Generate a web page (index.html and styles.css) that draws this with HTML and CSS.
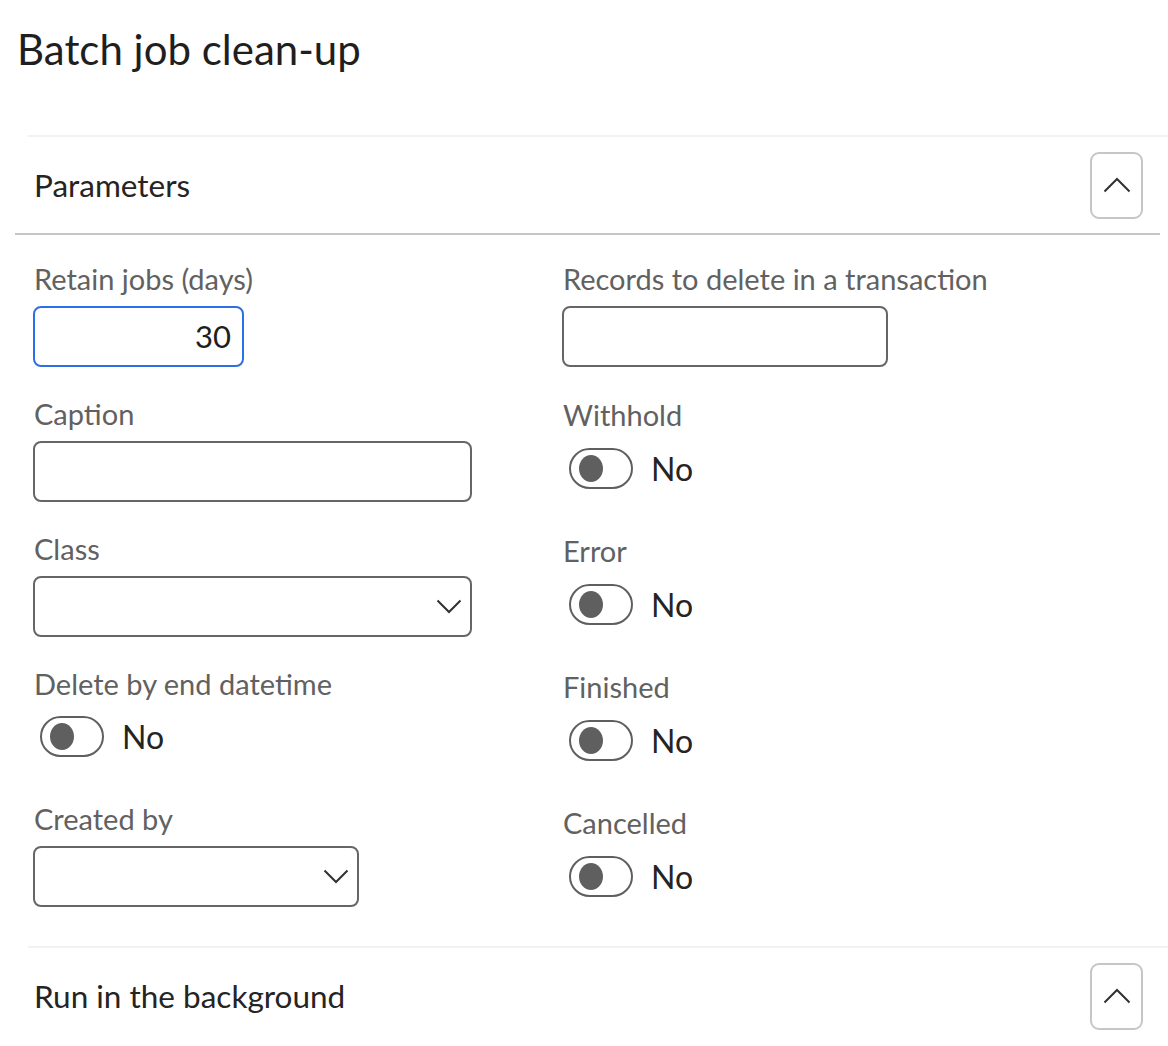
FILE: index.html
```html
<!DOCTYPE html>
<html lang="en">
<head>
<meta charset="utf-8">
<title>Batch job clean-up</title>
<link rel="stylesheet" href="styles.css">
</head>
<body>
<div class="page">
  <h1 class="title">Batch job clean-up</h1>

  <section class="section">
    <div class="section-head">
      <h2 class="section-title">Parameters</h2>
      <button class="collapse" type="button" aria-label="Collapse">
        <svg width="28" height="16" viewBox="0 0 28 16"><path d="M1.5 14.5 L14 2 L26.5 14.5" fill="none" stroke="#323130" stroke-width="2"/></svg>
      </button>
    </div>
  </section>
  <div class="rule"></div>

  <div class="form">
    <div class="col">
      <div class="field">
        <div class="label">Retain jobs (days)</div>
        <div class="control"><div class="input input-sm focused">30</div></div>
      </div>
      <div class="field">
        <div class="label">Caption</div>
        <div class="control"><div class="input input-lg"></div></div>
      </div>
      <div class="field">
        <div class="label">Class</div>
        <div class="control"><div class="input input-lg select">
          <svg class="chev" width="26" height="15" viewBox="0 0 26 15"><path d="M1.5 1.5 L13 13 L24.5 1.5" fill="none" stroke="#323130" stroke-width="2"/></svg>
        </div></div>
      </div>
      <div class="field">
        <div class="label">Delete by end datetime</div>
        <div class="control toggle-row"><span class="toggle"><span class="knob"></span></span><span class="toggle-text">No</span></div>
      </div>
      <div class="field">
        <div class="label">Created by</div>
        <div class="control"><div class="input input-md select">
          <svg class="chev" width="26" height="15" viewBox="0 0 26 15"><path d="M1.5 1.5 L13 13 L24.5 1.5" fill="none" stroke="#323130" stroke-width="2"/></svg>
        </div></div>
      </div>
    </div>
    <div class="col col-right">
      <div class="field">
        <div class="label">Records to delete in a transaction</div>
        <div class="control"><div class="input input-md"></div></div>
      </div>
      <div class="field">
        <div class="label">Withhold</div>
        <div class="control toggle-row"><span class="toggle"><span class="knob"></span></span><span class="toggle-text">No</span></div>
      </div>
      <div class="field">
        <div class="label">Error</div>
        <div class="control toggle-row"><span class="toggle"><span class="knob"></span></span><span class="toggle-text">No</span></div>
      </div>
      <div class="field">
        <div class="label">Finished</div>
        <div class="control toggle-row"><span class="toggle"><span class="knob"></span></span><span class="toggle-text">No</span></div>
      </div>
      <div class="field">
        <div class="label">Cancelled</div>
        <div class="control toggle-row"><span class="toggle"><span class="knob"></span></span><span class="toggle-text">No</span></div>
      </div>
    </div>
  </div>

  <section class="section">
    <div class="section-head">
      <h2 class="section-title">Run in the background</h2>
      <button class="collapse" type="button" aria-label="Collapse">
        <svg width="28" height="16" viewBox="0 0 28 16"><path d="M1.5 14.5 L14 2 L26.5 14.5" fill="none" stroke="#323130" stroke-width="2"/></svg>
      </button>
    </div>
  </section>
</div>
</body>
</html>
```

FILE: styles.css
```css
* { box-sizing: border-box; }

html, body {
  margin: 0;
  padding: 0;
  background: #ffffff;
}

body {
  font-family: Lato, "Open Sans", "Noto Sans", sans-serif;
  color: #201f1e;
  overflow: hidden;
}

.page {
  width: 1168px;
  height: 1046px;
  overflow: hidden;
}

.title {
  margin: 23px 0 0 17px;
  font-size: 42px;
  line-height: 52px;
  font-weight: 400;
  color: #1f1f1f;
}

.section {
  margin: 60px 0 0 28px;
  border-top: 2px solid #f3f2f1;
}

.section-head {
  height: 96px;
  display: flex;
  align-items: center;
  justify-content: space-between;
  padding: 0 25px 0 6px;
}

.section-title {
  margin: 0;
  font-size: 31.5px;
  line-height: 40px;
  font-weight: 400;
  color: #252423;
}

.collapse {
  width: 53px;
  height: 67px;
  border: 2px solid #c8c6c4;
  border-radius: 9px;
  background: #ffffff;
  display: flex;
  align-items: center;
  justify-content: center;
  padding: 0;
}

.rule {
  height: 2px;
  background: #c8c6c4;
  margin: 0 8px 0 15px;
}

.form {
  display: grid;
  grid-template-columns: 529px 1fr;
  padding: 26px 0 0 33px;
}

.form + .section {
  margin-top: 35px;
}

.col {
  display: flex;
  flex-direction: column;
  gap: 29px;
}

.col-right {
  gap: 30px;
}

.field {
  display: flex;
  flex-direction: column;
}

.label {
  font-size: 29px;
  line-height: 36px;
  color: #616161;
  padding-left: 1px;
  white-space: nowrap;
}

.control {
  margin-top: 9px;
  height: 61px;
}

.input {
  height: 61px;
  border: 2px solid #666666;
  border-radius: 8px;
  background: #ffffff;
  font-size: 31px;
  line-height: 57px;
  color: #201f1e;
  padding: 0 11px;
}

.input-sm { width: 211px; }
.input-md { width: 326px; }
.input-lg { width: 439px; }

.focused {
  border-color: #2f6fe4;
  text-align: right;
}

.select {
  display: flex;
  align-items: center;
  justify-content: flex-end;
  padding-right: 8px;
}

.chev { display: block; }

.toggle-row {
  display: flex;
  align-items: flex-start;
  padding: 5px 0 0 7px;
}

.col-right .toggle-row {
  padding-top: 6px;
}

.toggle {
  width: 64px;
  height: 41px;
  border: 2px solid #5f5f5f;
  border-radius: 21px;
  display: flex;
  align-items: center;
  padding-left: 8px;
}

.knob {
  width: 24px;
  height: 27px;
  border-radius: 50%;
  background: #5f5f5f;
}

.toggle-text {
  margin-left: 18px;
  font-size: 32px;
  line-height: 41px;
  color: #252423;
}
```
